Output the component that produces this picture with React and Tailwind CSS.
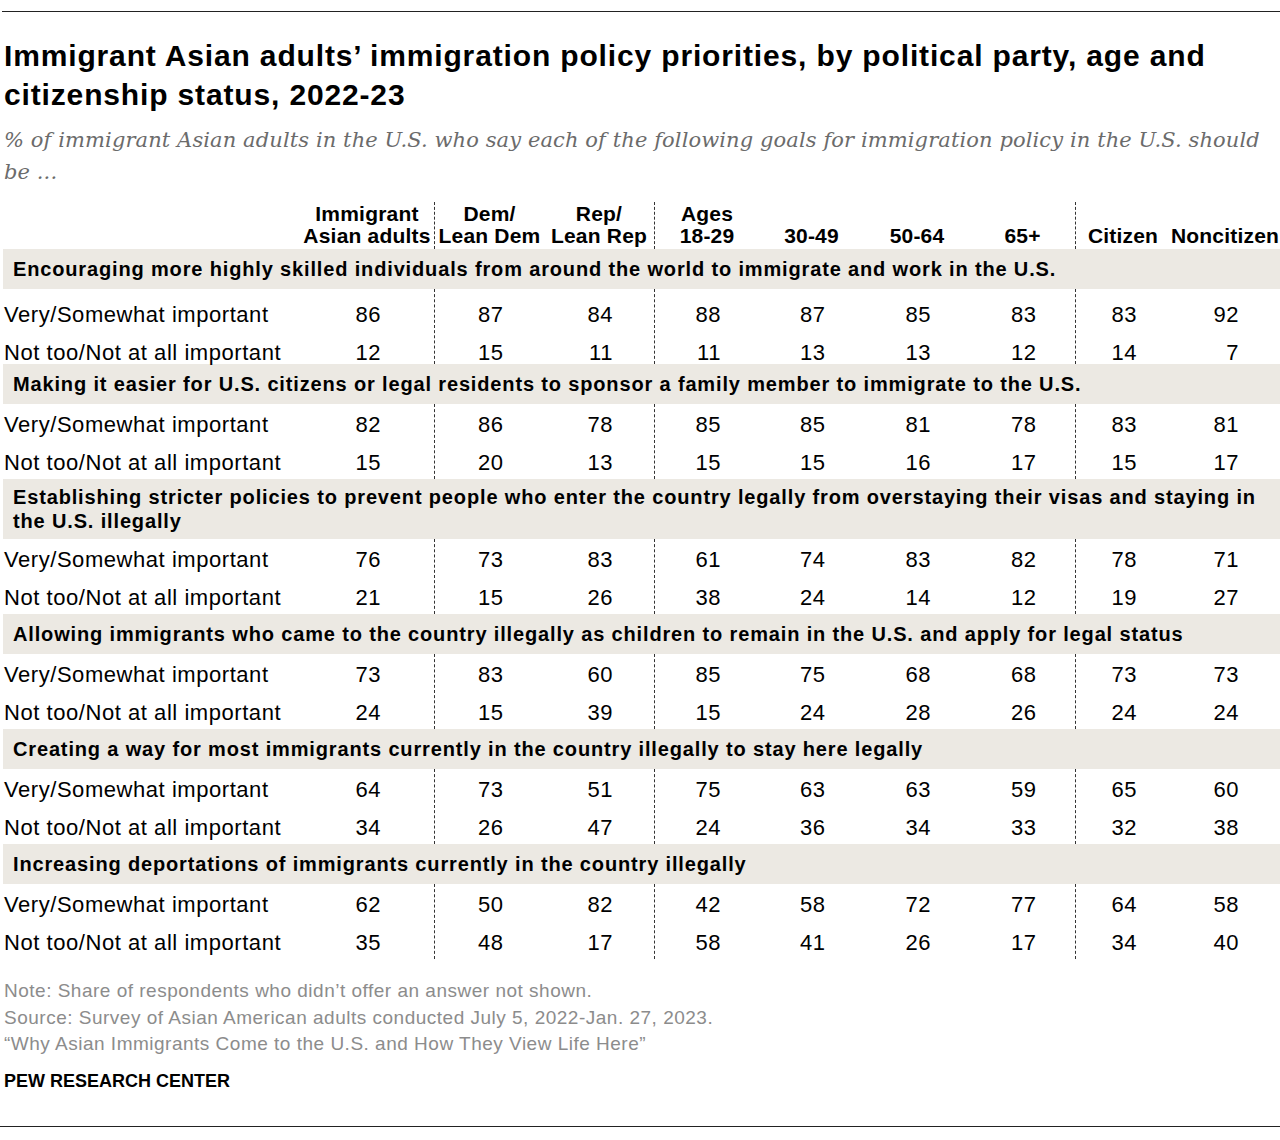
const cols = [
  { top: "Immigrant", bottom: "Asian adults" },
  { top: "Dem/", bottom: "Lean Dem", line: true },
  { top: "Rep/", bottom: "Lean Rep" },
  { top: "Ages", bottom: "18-29", line: true },
  { top: "", bottom: "30-49" },
  { top: "", bottom: "50-64" },
  { top: "", bottom: "65+" },
  { top: "", bottom: "Citizen", line: true },
  { top: "", bottom: "Noncitizen" },
];

const sections = [
  {
    title: ["Encouraging more highly skilled individuals from around the world to immigrate and work in the U.S."],
    very: [86, 87, 84, 88, 87, 85, 83, 83, 92],
    not: [12, 15, 11, 11, 13, 13, 12, 14, 7],
  },
  {
    title: ["Making it easier for U.S. citizens or legal residents to sponsor a family member to immigrate to the U.S."],
    very: [82, 86, 78, 85, 85, 81, 78, 83, 81],
    not: [15, 20, 13, 15, 15, 16, 17, 15, 17],
  },
  {
    title: [
      "Establishing stricter policies to prevent people who enter the country legally from overstaying their visas and staying in",
      "the U.S. illegally",
    ],
    very: [76, 73, 83, 61, 74, 83, 82, 78, 71],
    not: [21, 15, 26, 38, 24, 14, 12, 19, 27],
  },
  {
    title: ["Allowing immigrants who came to the country illegally as children to remain in the U.S. and apply for legal status"],
    very: [73, 83, 60, 85, 75, 68, 68, 73, 73],
    not: [24, 15, 39, 15, 24, 28, 26, 24, 24],
  },
  {
    title: ["Creating a way for most immigrants currently in the country illegally to stay here legally"],
    very: [64, 73, 51, 75, 63, 63, 59, 65, 60],
    not: [34, 26, 47, 24, 36, 34, 33, 32, 38],
  },
  {
    title: ["Increasing deportations of immigrants currently in the country illegally"],
    very: [62, 50, 82, 42, 58, 72, 77, 64, 58],
    not: [35, 48, 17, 58, 41, 26, 17, 34, 40],
  },
];

const grid =
  "grid grid-cols-[297px_134px_110px_110px_105px_105px_106px_105px_95px_110px]";

const App = () => {
  return (
    <div className="w-[1280px] h-[1140px] bg-white text-black font-['Liberation_Sans',Arial,sans-serif]">
      <div className="pt-[11px]">
        <div className="h-px bg-[#222] ml-[2px]" />
      </div>

      <div className="pl-[4px]">
        {/* Title */}
        <h1 className="mt-[24px] text-[30px] leading-[39px] font-bold tracking-[0.85px] whitespace-nowrap">
          Immigrant Asian adults’ immigration policy priorities, by political party, age and
          <br />
          citizenship status, 2022-23
        </h1>

        <p className="mt-[10px] text-[21px] leading-[32px] italic tracking-[0.1px] text-[#6b6b6b] font-['DejaVu_Serif',Georgia,serif] whitespace-nowrap">
          % of immigrant Asian adults in the U.S. who say each of the following goals for immigration policy in the U.S. should
          <br />
          be ...
        </p>
      </div>

      {/* Table */}
      <div className="mt-[14px] pl-[3px]">
        <div className={`${grid} h-[47px] text-[21px] leading-[22px] font-bold tracking-[0.2px]`}>
          <div />
          {cols.map((c, i) => (
            <div
              key={i}
              className={`flex flex-col items-center justify-end pb-[2px] whitespace-nowrap ${
                c.line ? "border-l border-dashed border-[#333]" : ""
              }`}
            >
              <span>{c.top}</span>
              <span>{c.bottom}</span>
            </div>
          ))}
        </div>

        {sections.map((s, si) => (
          <div key={s.title[0]}>
            <div className="bg-[#ECE9E3] min-h-[40px] py-[6px] pl-[10px] flex flex-col justify-center text-[20px] leading-[24px] font-bold tracking-[0.85px] whitespace-nowrap">
              {s.title.map((t) => (
                <span key={t}>{t}</span>
              ))}
            </div>

            <div className={`${grid} text-[22px] leading-[24px] tracking-[0.55px]`}>
              <div
                className={`flex flex-col gap-[14px] pl-[1px] whitespace-nowrap ${
                  si === 0 ? "pt-[14px] h-[75px]" : "pt-[9px] pb-[4px]"
                }`}
              >
                <span>Very/Somewhat important</span>
                <span>Not too/Not at all important</span>
              </div>
              {s.very.map((v, i) => (
                <div
                  key={i}
                  className={`flex flex-col items-center gap-[14px] ${
                    si === 0 ? "pt-[14px] h-[75px]" : "pt-[9px] pb-[4px]"
                  } ${cols[i].line ? "border-l border-dashed border-[#333]" : ""}`}
                >
                  <span className="w-[28px] text-right">{v}</span>
                  <span className="w-[28px] text-right">{s.not[i]}</span>
                </div>
              ))}
            </div>
          </div>
        ))}
      </div>

      {/* Footer */}
      <div className="pl-[4px] mt-[19px] text-[19px] leading-[26.5px] tracking-[0.5px] text-[#8c8c8c]">
        <p>Note: Share of respondents who didn’t offer an answer not shown.</p>
        <p>Source: Survey of Asian American adults conducted July 5, 2022-Jan. 27, 2023.</p>
        <p>“Why Asian Immigrants Come to the U.S. and How They View Life Here”</p>
        <p className="mt-[10px] text-black text-[18px] tracking-normal font-bold leading-[26px]">PEW RESEARCH CENTER</p>
      </div>

      <div className="mt-[32px] h-px bg-[#222]" />
    </div>
  );
};

export default App;
